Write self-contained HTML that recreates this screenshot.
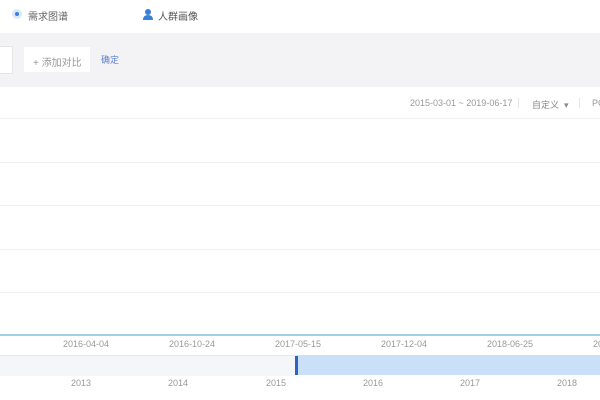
<!DOCTYPE html><html><head><meta charset="utf-8"><style>
body{margin:0;width:600px;height:400px;overflow:hidden;background:#fff;font-family:"Liberation Sans","Noto Sans CJK SC",sans-serif;position:relative}
.a{position:absolute;white-space:nowrap}
.t{font-size:9px;color:#999}
</style></head><body>
<div class="a" style="left:0;top:0;width:600px;height:33px;background:#fff"></div>
<div class="a" style="left:12px;top:9px;width:10px;height:10px;border-radius:50%;background:#dbe7fb"></div>
<div class="a" style="left:15px;top:12px;width:4px;height:4px;border-radius:50%;background:#3b7de0"></div>
<div class="a" style="left:28px;top:8px;font-size:10px;color:#666">需求图谱</div>
<svg class="a" style="left:142px;top:8px" width="12" height="12"><circle cx="6" cy="4" r="3" fill="#3a7fd8"/><path d="M1 12 Q1 7 6 7 Q11 7 11 12Z" fill="#3a7fd8"/></svg>
<div class="a" style="left:158px;top:8px;font-size:10px;color:#555">人群画像</div>
<div class="a" style="left:0;top:33px;width:600px;height:54px;background:#f3f3f5"></div>
<div class="a" style="left:0;top:46px;width:12px;height:26px;background:#fff;border:1px solid #e4e4e4;border-left:none"></div>
<div class="a" style="left:24px;top:47px;width:66px;height:25px;background:#fff"></div>
<div class="a" style="left:33px;top:54px;font-size:10px;color:#999">+ 添加对比</div>
<div class="a" style="left:101px;top:53px;font-size:9px;color:#5b7fd0">确定</div>
<div class="a t" style="left:410px;top:98px">2015-03-01 ~ 2019-06-17</div>
<div class="a" style="left:518px;top:98px;width:1px;height:10px;background:#e6e6e6"></div>
<div class="a t" style="left:532px;top:98px;color:#888">自定义 &nbsp;▾</div>
<div class="a" style="left:579px;top:98px;width:1px;height:10px;background:#e6e6e6"></div>
<div class="a t" style="left:592px;top:98px">PC</div>
<div class="a" style="left:0;top:118px;width:600px;height:1px;background:#f0f0f0"></div>
<div class="a" style="left:0;top:162px;width:600px;height:1px;background:#f0f0f0"></div>
<div class="a" style="left:0;top:205px;width:600px;height:1px;background:#f0f0f0"></div>
<div class="a" style="left:0;top:249px;width:600px;height:1px;background:#f0f0f0"></div>
<div class="a" style="left:0;top:292px;width:600px;height:1px;background:#f0f0f0"></div>
<div class="a" style="left:0;top:334px;width:600px;height:2px;background:#9fd0e6"></div>
<div class="a t" style="left:63px;top:339px">2016-04-04</div>
<div class="a t" style="left:169px;top:339px">2016-10-24</div>
<div class="a t" style="left:275px;top:339px">2017-05-15</div>
<div class="a t" style="left:381px;top:339px">2017-12-04</div>
<div class="a t" style="left:487px;top:339px">2018-06-25</div>
<div class="a t" style="left:593px;top:339px">20</div>
<div class="a" style="left:0;top:355px;width:296px;height:20px;background:#f5f6f9;border-top:1px solid #e8e8e8"></div>
<div class="a" style="left:296px;top:355px;width:304px;height:20px;background:#cadff8"></div>
<div class="a" style="left:295px;top:356px;width:3px;height:19px;background:#2d65c0"></div>
<div class="a t" style="left:71px;top:378px">2013</div>
<div class="a t" style="left:168px;top:378px">2014</div>
<div class="a t" style="left:266px;top:378px">2015</div>
<div class="a t" style="left:363px;top:378px">2016</div>
<div class="a t" style="left:460px;top:378px">2017</div>
<div class="a t" style="left:557px;top:378px">2018</div>
</body></html>
